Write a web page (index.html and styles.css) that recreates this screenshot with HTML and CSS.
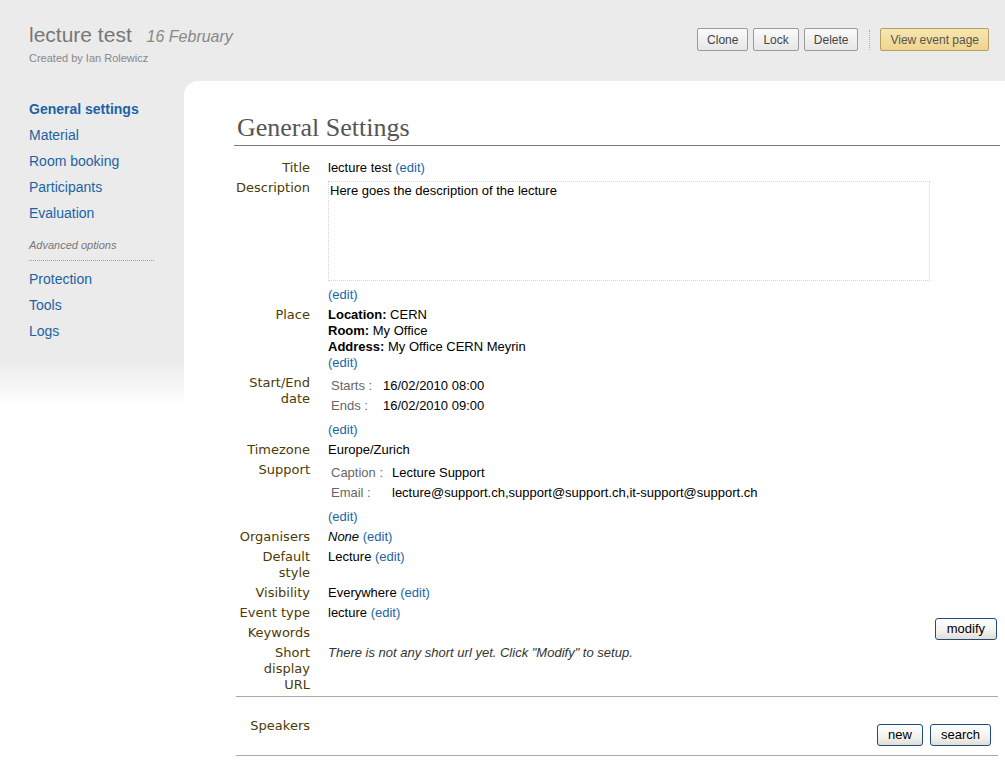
FILE: index.html
```html
<!DOCTYPE html>
<html>
<head>
<meta charset="utf-8">
<title>lecture test - General Settings</title>
<link rel="stylesheet" href="styles.css">
</head>
<body>
<header class="top">
  <div class="event-title">
    <h1 class="event-name">lecture test <span class="event-date">16 February</span></h1>
    <div class="creator">Created by Ian Rolewicz</div>
  </div>
  <div class="actions">
    <button class="tbtn">Clone</button>
    <button class="tbtn">Lock</button>
    <button class="tbtn">Delete</button>
    <span class="tsep"></span>
    <button class="tbtn tbtn-view">View event page</button>
  </div>
</header>
<div class="wrap">
  <nav class="sidebar">
    <a class="nav-link active">General settings</a>
    <a class="nav-link">Material</a>
    <a class="nav-link">Room booking</a>
    <a class="nav-link">Participants</a>
    <a class="nav-link">Evaluation</a>
    <div class="nav-section">Advanced options</div>
    <a class="nav-link">Protection</a>
    <a class="nav-link">Tools</a>
    <a class="nav-link">Logs</a>
  </nav>
  <main class="main">
    <h2 class="page-title">General Settings</h2>
    <div class="fields">
      <div class="label">Title</div>
      <div class="value">lecture test <a class="edit">(edit)</a></div>

      <div class="label">Description</div>
      <div class="value">
        <div class="desc-box">Here goes the description of the lecture</div>
        <a class="edit edit-block">(edit)</a>
      </div>

      <div class="label">Place</div>
      <div class="value">
        <div><b>Location:</b> CERN</div>
        <div><b>Room:</b> My Office</div>
        <div><b>Address:</b> My Office CERN Meyrin</div>
        <a class="edit">(edit)</a>
      </div>

      <div class="label">Start/End date</div>
      <div class="value">
        <div class="sub sub-dates">
          <div class="sub-label">Starts :</div><div class="sub-val">16/02/2010 08:00</div>
          <div class="sub-label">Ends :</div><div class="sub-val">16/02/2010 09:00</div>
        </div>
        <a class="edit">(edit)</a>
      </div>

      <div class="label">Timezone</div>
      <div class="value">Europe/Zurich</div>

      <div class="label">Support</div>
      <div class="value">
        <div class="sub sub-support">
          <div class="sub-label">Caption :</div><div class="sub-val">Lecture Support</div>
          <div class="sub-label">Email :</div><div class="sub-val">lecture@support.ch,support@support.ch,it-support@support.ch</div>
        </div>
        <a class="edit">(edit)</a>
      </div>

      <div class="label">Organisers</div>
      <div class="value"><i>None</i> <a class="edit">(edit)</a></div>

      <div class="label">Default style</div>
      <div class="value">Lecture <a class="edit">(edit)</a></div>

      <div class="label">Visibility</div>
      <div class="value">Everywhere <a class="edit">(edit)</a></div>

      <div class="label">Event type</div>
      <div class="value">lecture <a class="edit">(edit)</a></div>

      <div class="label">Keywords</div>
      <div class="value value-keywords"><button class="xbtn xbtn-modify">modify</button></div>

      <div class="label">Short display URL</div>
      <div class="value note">There is not any short url yet. Click "Modify" to setup.</div>
    </div>
    <div class="rule"></div>
    <div class="section">
      <div class="label">Speakers</div>
      <div class="section-actions">
        <button class="xbtn">new</button>
        <button class="xbtn">search</button>
      </div>
    </div>
    <div class="rule"></div>
  </main>
</div>
</body>
</html>
```
FILE: styles.css
```css
html, body {
  margin: 0;
  padding: 0;
}
body {
  background: #ebebeb;
  font-family: "Liberation Sans", Arial, sans-serif;
  color: #000;
  min-height: 100vh;
  display: flex;
  flex-direction: column;
}
.top {
  height: 81px;
  box-sizing: border-box;
  display: flex;
  justify-content: space-between;
  align-items: flex-start;
  padding: 0 16px 0 29px;
}
.event-title {
  padding-top: 23px;
}
.event-name {
  margin: 0;
  font-weight: normal;
  font-size: 21px;
  line-height: 24px;
  color: #777;
}
.event-date {
  font-style: italic;
  font-size: 16px;
  color: #888;
  margin-left: 9px;
}
.creator {
  margin-top: 2px;
  font-size: 11px;
  line-height: 14px;
  color: #888;
}
.actions {
  margin-top: 28px;
  display: flex;
  align-items: center;
  gap: 5px;
}
.tbtn {
  height: 23px;
  padding: 2px 9px 0;
  border: 1px solid #9a9a9a;
  border-radius: 2px;
  background: linear-gradient(#fbfbfb, #e6e6e6);
  font-family: "Liberation Sans", Arial, sans-serif;
  font-size: 12px;
  color: #444;
  line-height: 19px;
}
.tbtn-view {
  background: linear-gradient(#f8e6b2, #efd58c);
  border-color: #b59f63;
  color: #555;
}
.tsep {
  display: block;
  width: 0;
  height: 20px;
  border-left: 1px dotted #aaa;
  margin: 0 5px 0 6px;
}
.wrap {
  flex: 1;
  display: flex;
}
.sidebar {
  width: 184px;
  flex: none;
  box-sizing: border-box;
  padding: 15px 0 0 29px;
  background: linear-gradient(#ebebeb 0, #ebebeb 278px, #ffffff 326px);
  display: flex;
  flex-direction: column;
  align-items: flex-start;
}
.nav-link {
  font-size: 14px;
  line-height: 26px;
  color: #1b63a6;
  text-decoration: none;
}
.nav-link.active {
  font-weight: bold;
}
.nav-section {
  margin-top: 11px;
  margin-bottom: 5px;
  width: 125px;
  font-size: 11px;
  line-height: 16px;
  font-style: italic;
  color: #777;
  padding-bottom: 7px;
  border-bottom: 1px dotted #999;
}
.main {
  flex: 1;
  background: #fff;
  border-top-left-radius: 14px;
  padding: 33px 5px 20px 50px;
}
.page-title {
  margin: 0;
  padding: 0 0 3px 3px;
  font-family: "Liberation Serif", "Times New Roman", serif;
  font-weight: normal;
  font-size: 26px;
  line-height: 28px;
  color: #555;
  border-bottom: 1px solid #777;
}
.fields {
  margin-top: 14px;
  display: grid;
  grid-template-columns: 76px 1fr;
  column-gap: 18px;
  row-gap: 4px;
  padding-bottom: 3px;
}
.label {
  text-align: right;
  font-family: "DejaVu Sans", Verdana, sans-serif;
  font-size: 13px;
  line-height: 16px;
  color: #4c3b05;
}
.value {
  font-size: 13px;
  line-height: 16px;
  min-width: 0;
}
.edit {
  color: #1b63a6;
  text-decoration: none;
}
.desc-box {
  width: 602px;
  height: 100px;
  box-sizing: border-box;
  margin-top: 1px;
  padding: 1px 1px;
  border: 1px dotted #d4d4d4;
}
.edit-block {
  display: block;
  margin-top: 6px;
}
.sub {
  display: grid;
  margin: 1px 0 6px;
}
.sub-dates {
  grid-template-columns: 55px auto;
}
.sub-support {
  grid-template-columns: 64px auto;
}
.sub-label {
  padding-left: 3px;
  line-height: 20px;
  color: #666;
}
.sub-val {
  line-height: 20px;
}
.value-keywords {
  display: flex;
  justify-content: flex-end;
}
.xbtn {
  height: 22px;
  padding: 0 10px;
  border: 1px solid #1f4c80;
  border-radius: 3px;
  background: linear-gradient(#ffffff, #f3f2ee 60%, #e2ded3);
  font-family: "Liberation Sans", Arial, sans-serif;
  font-size: 13px;
  line-height: 20px;
  color: #000;
}
.xbtn-modify {
  margin-top: -7px;
  margin-bottom: 1px;
  margin-right: 3px;
  padding: 0 11px;
}
.note {
  font-style: italic;
  color: #333;
}
.rule {
  margin: 0 2px;
  border-top: 1px solid #aaa;
}
.section {
  display: grid;
  grid-template-columns: 76px 1fr;
  column-gap: 18px;
  padding: 21px 0 9px;
}
.section-actions {
  display: flex;
  justify-content: flex-end;
  gap: 7px;
  margin-top: 6px;
  margin-right: 9px;
}
```
